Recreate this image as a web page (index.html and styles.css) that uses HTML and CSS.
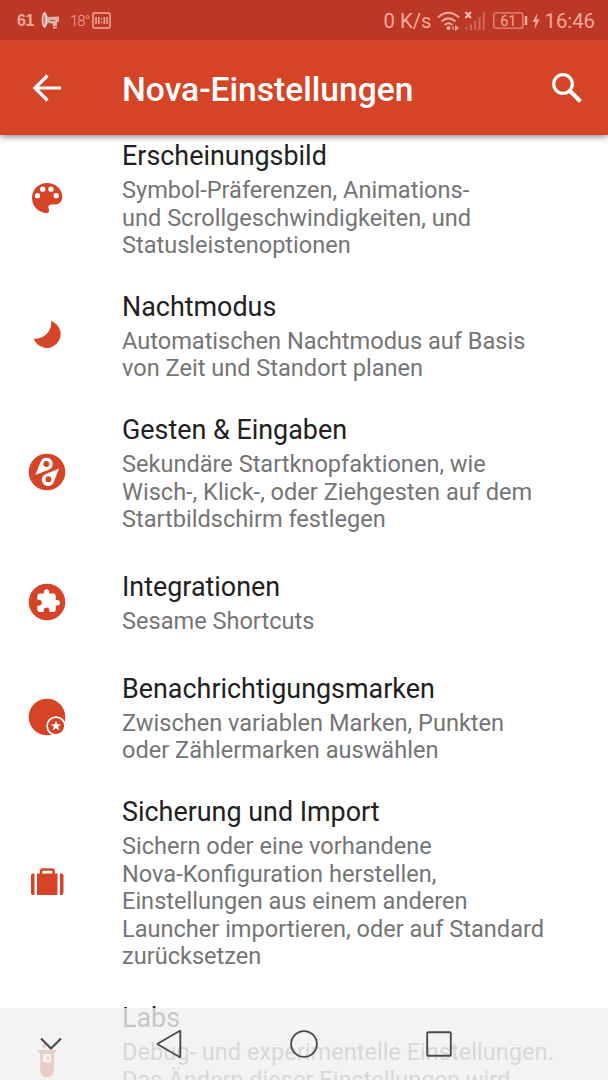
FILE: index.html
```html
<!DOCTYPE html>
<html lang="de">
<head>
    <meta charset="UTF-8">
    <meta name="viewport" content="width=device-width, initial-scale=1.0">
    <title>Nova-Einstellungen</title>
    <link rel="stylesheet" href="styles.css">
</head>
<body>
    <header class="head">
        <div class="statusbar">
            <div class="status-left">
                <b>61</b>
                <svg class="horn" width="20" height="20" viewBox="0 0 20 20">
                    <path d="M3 1 L7 6 L18 5.500 V10.500 L16 11.500 L16 17 L12.500 18 L11.500 12.500 L7 12 L3 17 Z" fill="#dfb0a8"/>
                    <ellipse cx="3.500" cy="9" rx="2.900" ry="7.900" fill="#efc9c2"/>
                    <ellipse cx="3.300" cy="9" rx="1.200" ry="5" fill="#c58c83"/>
                    <path d="M9 9.500 L14 9.500 M13 15.500 L16 15.500" stroke="#b0574b" stroke-width="1.200"/>
                </svg>
                <span class="temp">18°</span>
                <svg class="clock" width="19" height="17" viewBox="0 0 19 17">
                    <rect x="1" y="1" width="17" height="15" rx="1.500" fill="none" stroke="#f3aa9c" stroke-width="1.500"/>
                    <path d="M4 5 V12 M6.700 5 V12 M12.300 5 V12 M15 5 V12" stroke="#f3aa9c" stroke-width="1.500"/>
                    <path d="M9.500 6 V7.500 M9.500 9.500 V11" stroke="#f3aa9c" stroke-width="1.300"/>
                </svg>
            </div>
            <div class="status-right">
                <span class="speed">0 K/s</span>
                <svg class="wifi" width="24" height="20" viewBox="0 0 24 20">
                    <g fill="none" stroke="#f3aa9c" stroke-width="2">
                        <path d="M1 6.500 Q11.500 -3 22 6.500"/>
                        <path d="M4.500 10.500 Q11.500 4.300 18.500 10.500"/>
                        <path d="M7.700 14 Q11.500 10.500 15.300 14"/>
                    </g>
                    <circle cx="11.500" cy="17" r="2" fill="#f3aa9c"/>
                    <path d="M18 14 L22 17 L18 20 Z" fill="#f3aa9c"/>
                    <path d="M17 14 V20 L14.500 17 Z" fill="#dd7768"/>
                </svg>
                <svg class="signal" width="20" height="20" viewBox="0 0 20 20">
                    <path d="M0.500 1 L6 7 M6 1 L0.500 7" stroke="#f6c0b5" stroke-width="2"/>
                    <path d="M1.500 19 V16 M6 19 V13.500 M10.300 19 V10 M14.600 19 V6 M18.800 19 V1.500" stroke="#d4685a" stroke-width="2"/>
                </svg>
                <svg class="battery" width="35" height="17" viewBox="0 0 35 17">
                    <rect x="0.800" y="0.800" width="29" height="15.400" rx="2" fill="none" stroke="#e88e7f" stroke-width="1.300"/>
                    <path d="M33 4 V13" stroke="#f3aa9c" stroke-width="2.500"/>
                    <text x="15.300" y="13.600" text-anchor="middle" class="battery-text">61</text>
                </svg>
                <svg class="bolt" width="8" height="16" viewBox="0 0 8 16">
                    <path d="M5.500 0 L0.500 9 H3.500 L2.500 16 L7.500 6.500 H4.500 Z" fill="#f3aa9c"/>
                </svg>
                <span class="time">16:46</span>
            </div>
        </div>
        <div class="appbar">
            <svg class="back" width="28" height="28" viewBox="0 0 28 28">
                <path d="M28 14 H2.500 M14.500 1.500 L2 14 L14.500 26.500" fill="none" stroke="#fff" stroke-width="3.200"/>
            </svg>
            <h1>Nova-Einstellungen</h1>
            <svg class="search" width="30" height="30" viewBox="0 0 30 30">
                <circle cx="11" cy="11" r="9.300" fill="none" stroke="#fff" stroke-width="3.200"/>
                <path d="M17.500 17.500 L28.500 28.500" stroke="#fff" stroke-width="4"/>
            </svg>
        </div>
    </header>

    <ul class="list">
        <li class="item">
            <div class="icon">
                <svg width="38" height="38" viewBox="0 0 38 38">
                    <path d="M19 4 C10.500 4 4 10.500 4 19 C4 27.500 11 34 18.500 34 C21 34 21.500 32 20.800 30 C19.500 27.500 21 25.500 24 25.500 H27 C31.500 25.500 34.300 22 34.300 18 C34.300 10 27.500 4 19 4 Z" fill="#d64427"/>
                    <g fill="#fff">
                        <circle cx="9.500" cy="16.700" r="2.600"/>
                        <circle cx="14.700" cy="10.200" r="2.600"/>
                        <circle cx="23" cy="10.200" r="2.600"/>
                        <circle cx="28.200" cy="16.700" r="2.600"/>
                    </g>
                </svg>
            </div>
            <div class="text">
                <h2>Erscheinungsbild</h2>
                <p>Symbol-Präferenzen, Animations-<br>und Scrollgeschwindigkeiten, und<br>Statusleistenoptionen</p>
            </div>
        </li>
        <li class="item">
            <div class="icon">
                <svg width="38" height="38" viewBox="0 0 38 38">
                    <path d="M23 5 A13.800 13.800 0 1 1 5.700 22.500 A15.500 15.500 0 0 0 23 5 Z" fill="#d64427"/>
                </svg>
            </div>
            <div class="text">
                <h2>Nachtmodus</h2>
                <p>Automatischen Nachtmodus auf Basis<br>von Zeit und Standort planen</p>
            </div>
        </li>
        <li class="item">
            <div class="icon">
                <svg width="38" height="38" viewBox="0 0 38 38">
                    <circle cx="19" cy="19" r="18.300" fill="#d64427"/>
                    <path d="M7.200 22 L12.700 8.800 A6.200 6.200 0 1 1 20.700 16.700 Z" fill="#fff"/>
                    <circle cx="18.300" cy="11" r="3" fill="#d64427"/>
                    <path d="M31 15.500 L26 28.500 A6.200 6.200 0 1 1 18 20.900 Z" fill="#fff"/>
                    <circle cx="20.400" cy="26.300" r="3" fill="#d64427"/>
                </svg>
            </div>
            <div class="text">
                <h2>Gesten &amp; Eingaben</h2>
                <p>Sekundäre Startknopfaktionen, wie<br>Wisch-, Klick-, oder Ziehgesten auf dem<br>Startbildschirm festlegen</p>
            </div>
        </li>
        <li class="item">
            <div class="icon">
                <svg width="38" height="38" viewBox="0 0 38 38">
                    <circle cx="19" cy="19" r="18.300" fill="#d64427"/>
                    <path transform="translate(7.200 5.200) scale(1.080)" fill="#fff" d="M20.500 11H19V7c0-1.100-.9-2-2-2h-4V3.500C13 2.120 11.880 1 10.500 1S8 2.120 8 3.500V5H4c-1.100 0-1.990.9-1.990 2v3.800H3.500c1.490 0 2.700 1.210 2.700 2.700s-1.210 2.700-2.700 2.700H2V20c0 1.100.9 2 2 2h3.800v-1.500c0-1.490 1.210-2.700 2.700-2.700 1.490 0 2.700 1.210 2.700 2.700V22H17c1.100 0 2-.9 2-2v-4h1.500c1.380 0 2.500-1.120 2.500-2.500S21.880 11 20.500 11z"/>
                </svg>
            </div>
            <div class="text">
                <h2>Integrationen</h2>
                <p>Sesame Shortcuts</p>
            </div>
        </li>
        <li class="item">
            <div class="icon">
                <svg width="38" height="38" viewBox="0 0 38 38">
                    <circle cx="19" cy="19" r="18.300" fill="#d64427"/>
                    <circle cx="28" cy="28" r="8.900" fill="#d64427" stroke="#fff" stroke-width="1.700"/>
                    <path d="M28 22.900 L29.400 26.300 L33 26.500 L30.200 28.800 L31.200 32.300 L28 30.300 L24.800 32.300 L25.800 28.800 L23 26.500 L26.600 26.300 Z" fill="#fff"/>
                </svg>
            </div>
            <div class="text">
                <h2>Benachrichtigungsmarken</h2>
                <p>Zwischen variablen Marken, Punkten<br>oder Zählermarken auswählen</p>
            </div>
        </li>
        <li class="item">
            <div class="icon">
                <svg width="38" height="38" viewBox="0 0 38 38">
                    <g fill="#d64427">
                        <path d="M6.500 10.500 V32 H5 A2 2 0 0 1 3 30 V12.500 A2 2 0 0 1 5 10.500 Z"/>
                        <rect x="9" y="10.500" width="20.500" height="21.500"/>
                        <path d="M32 10.500 H33.500 A2 2 0 0 1 35.500 12.500 V30 A2 2 0 0 1 33.500 32 H32 Z"/>
                    </g>
                    <path d="M13 11 V8.500 Q13 6.500 15 6.500 H23.700 Q25.700 6.500 25.700 8.500 V11" fill="none" stroke="#d64427" stroke-width="2.500"/>
                </svg>
            </div>
            <div class="text">
                <h2>Sicherung und Import</h2>
                <p>Sichern oder eine vorhandene<br>Nova-Konfiguration herstellen,<br>Einstellungen aus einem anderen<br>Launcher importieren, oder auf Standard<br>zurücksetzen</p>
            </div>
        </li>
        <li class="item last">
            <div class="icon">
                <svg width="38" height="38" viewBox="0 0 38 38">
                    <g fill="#d64427">
                        <circle cx="16" cy="4" r="2"/>
                        <path d="M10 8 H28 V10.500 H26 V29.500 A7 7 0 0 1 12.200 29.500 V10.500 H10 Z"/>
                    </g>
                    <rect x="15" y="12" width="8" height="8" fill="#fff"/>
                    <circle cx="20" cy="16" r="1.500" fill="#d64427"/>
                </svg>
            </div>
            <div class="text">
                <h2>Labs</h2>
                <p>Debug- und experimentelle Einstellungen.<br>Das Ändern dieser Einstellungen wird</p>
            </div>
        </li>
    </ul>

    <nav class="navbar">
        <svg width="22" height="14" viewBox="0 0 22 14">
            <path d="M1 1.500 L11 11.500 L21 1.500" fill="none" stroke="#4c4c4c" stroke-width="2.200"/>
        </svg>
        <svg width="26" height="30" viewBox="0 0 26 30">
            <path d="M24.300 2.300 V27.700 Q24.300 28.300 23.500 28 L2 15.500 Q1.200 15 2 14.500 L23.500 2 Q24.300 1.700 24.300 2.300 Z" fill="none" stroke="#4c4c4c" stroke-width="1.900"/>
        </svg>
        <svg width="28" height="28" viewBox="0 0 28 28">
            <circle cx="14" cy="14" r="12.900" fill="none" stroke="#4c4c4c" stroke-width="1.900"/>
        </svg>
        <svg width="26" height="26" viewBox="0 0 26 26">
            <rect x="1.200" y="1.200" width="23.600" height="23.600" rx="1" fill="none" stroke="#4c4c4c" stroke-width="1.900"/>
        </svg>
    </nav>
</body>
</html>
```
FILE: styles.css
```css
body {
    position: relative;
    margin: 0;
    width: 608px;
    height: 1080px;
    overflow: hidden;
    background-color: #fff;
    font-family: Roboto, "Noto Sans", sans-serif;
}

/* status bar + title */
.head {
    position: relative;
    z-index: 1;
    background-color: #d64427;
    box-shadow: 0 2px 6px rgba(0, 0, 0, 0.45);
}

.statusbar {
    display: flex;
    justify-content: space-between;
    align-items: center;
    height: 40px;
    padding: 1px 13px 0 17px;
    box-sizing: border-box;
    background-color: #bd3727;
    color: #f3aa9c;
}

.status-left,
.status-right {
    display: flex;
    align-items: center;
}

.status-left b {
    width: 18px;
    font-family: "Liberation Sans", sans-serif;
    font-size: 16px;
    letter-spacing: -0.3px;
}

.horn {
    margin-left: 6px;
}

.temp {
    width: 17px;
    margin-left: 9px;
    font-size: 15px;
    font-weight: 300;
    letter-spacing: -1px;
}

.clock {
    margin-left: 5px;
}

.speed,
.time {
    font-size: 20.3px;
}

.wifi {
    margin-left: 6px;
}

.signal {
    margin-left: 4px;
}

.battery {
    margin-left: 8px;
}

.battery-text {
    fill: #f3aa9c;
    font-size: 14.5px;
}

.bolt {
    margin: 0 4px 0 4px;
}

.appbar {
    display: flex;
    align-items: center;
    height: 95px;
    padding: 0 26px 0 33px;
}

.appbar h1 {
    flex: 1;
    margin: 4px 0 0 61px;
    color: #fff;
    font-size: 33.6px;
    font-weight: 500;
    line-height: 40px;
}

/* settings */
.list {
    margin: -12px 0 0;
    padding: 0;
    list-style: none;
}

.item {
    display: flex;
    align-items: center;
    min-height: 108px;
}

.last {
    min-height: 151px;
    align-items: flex-start;
}

.icon {
    display: flex;
    flex: none;
    box-sizing: border-box;
    width: 122px;
    padding-left: 28px;
}

.last .icon {
    padding-top: 57px;
}

.text {
    padding: 17px 0 14px;
}

.text h2 {
    margin: 0 0 5px;
    color: #212121;
    font-size: 26.9px;
    font-weight: 400;
    line-height: 32px;
}

.text p {
    margin: 0;
    color: #757575;
    font-size: 23.57px;
    line-height: 27.6px;
    white-space: nowrap;
}

/* soft buttons, over the list */
.navbar {
    position: absolute;
    left: 0;
    bottom: 0;
    z-index: 2;
    display: flex;
    align-items: center;
    box-sizing: border-box;
    width: 608px;
    height: 72px;
    padding-left: 40px;
    background-color: rgba(240, 240, 240, 0.8);
}

.navbar svg:nth-child(2) {
    margin-left: 94px;
}

.navbar svg:nth-child(3) {
    margin-left: 108px;
}

.navbar svg:nth-child(4) {
    margin-left: 108px;
}
```
